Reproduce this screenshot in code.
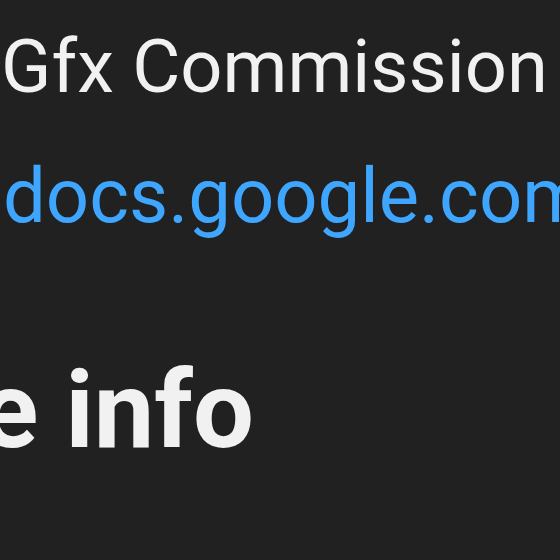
export default function App() {
  return (
    <div className="w-[560px] h-[560px] overflow-hidden bg-[#212121] font-['Roboto',sans-serif]">
      <div className="blur-[0.6px]">
        <div className="pt-[30px] pl-[1px] text-[74px] leading-none text-[#f1f1f1] whitespace-nowrap">Gfx Commission</div>
        <div className="mt-[54px] pl-[3px] text-[76px] leading-none text-[#3ea6ff] whitespace-nowrap">docs.google.com</div>
        <div className="mt-[122px] -ml-[20px] text-[108px] font-bold leading-none text-[#f1f1f1] whitespace-nowrap">e info</div>
      </div>
    </div>
  );
}
